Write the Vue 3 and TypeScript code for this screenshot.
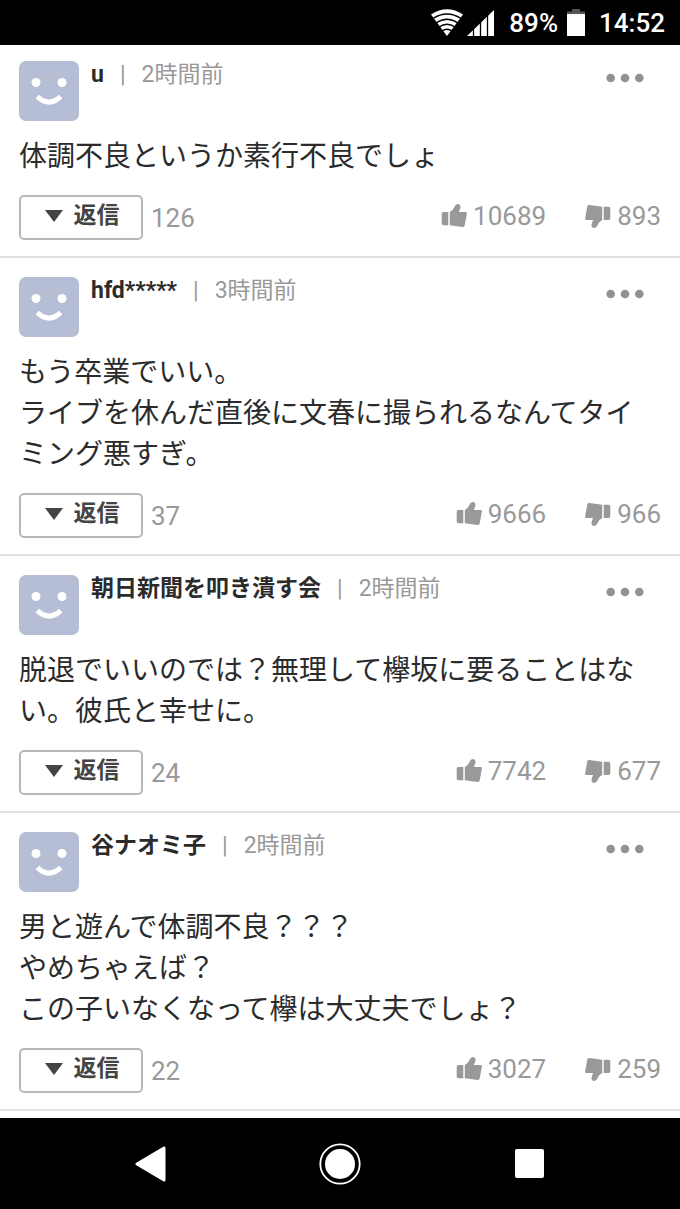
<script setup lang="ts">
interface Comment {
  id: number
  name: string
  time: string
  lines: string[]
  replies: number
  likes: number
  dislikes: number
}

const comments: Comment[] = [
  {
    id: 1,
    name: 'u',
    time: '2時間前',
    lines: ['体調不良というか素行不良でしょ'],
    replies: 126,
    likes: 10689,
    dislikes: 893,
  },
  {
    id: 2,
    name: 'hfd*****',
    time: '3時間前',
    lines: ['もう卒業でいい。', 'ライブを休んだ直後に文春に撮られるなんてタイミング悪すぎ。'],
    replies: 37,
    likes: 9666,
    dislikes: 966,
  },
  {
    id: 3,
    name: '朝日新聞を叩き潰す会',
    time: '2時間前',
    lines: ['脱退でいいのでは？無理して欅坂に要ることはない。彼氏と幸せに。'],
    replies: 24,
    likes: 7742,
    dislikes: 677,
  },
  {
    id: 4,
    name: '谷ナオミ子',
    time: '2時間前',
    lines: ['男と遊んで体調不良？？？', 'やめちゃえば？', 'この子いなくなって欅は大丈夫でしょ？'],
    replies: 22,
    likes: 3027,
    dislikes: 259,
  },
]
</script>

<template>
  <div class="screen">
    <header class="status">
      <svg class="wifi" width="32" height="27" viewBox="0 0 32 27" aria-hidden="true">
        <path d="M0 5.5Q16-5 32 5.5L16 27Z" fill="#fff" />
        <g fill="none" stroke="#000" stroke-width="1.3">
          <path d="M2 9.5Q16 .5 30 9.5" />
          <path d="M5 14Q16 6.5 27 14" />
          <path d="M8 18Q16 12.5 24 18" />
          <path d="M11 22Q16 18.5 21 22" />
        </g>
      </svg>
      <svg class="signal" width="27" height="27" viewBox="0 0 27 27" aria-hidden="true">
        <path d="M0 27L27 1V27Z" fill="#fff" />
        <path d="M6.5 0V27M13.5 0V27M20.5 0V27" stroke="#000" stroke-width="1.3" />
      </svg>
      <span class="percent">89%</span>
      <svg class="battery" width="18" height="27" viewBox="0 0 18 27" aria-hidden="true">
        <path d="M5 0H13V2.5H18V6H0V2.5H5Z" fill="#555" />
        <path d="M0 5H18V27H0Z" fill="#fff" />
      </svg>
      <span class="clock">14:52</span>
    </header>

    <main class="feed">
      <article v-for="c in comments" :key="c.id" class="comment">
        <div class="head">
          <svg class="avatar" width="60" height="60" viewBox="0 0 60 60" aria-hidden="true">
            <rect width="60" height="60" rx="7" fill="#b6bed5" />
            <circle cx="17" cy="21.5" r="4.5" fill="#fff" />
            <circle cx="43" cy="21.5" r="4.5" fill="#fff" />
            <path d="M18.3 35.7Q30 46.5 41.7 35.7" fill="none" stroke="#fff" stroke-width="5" />
          </svg>
          <div class="meta">
            <strong class="name">{{ c.name }}</strong>
            <span class="bar">|</span>
            <span class="time">{{ c.time }}</span>
          </div>
          <button class="more" type="button" aria-label="メニュー">
            <svg width="38" height="10" viewBox="0 0 38 10" aria-hidden="true">
              <g fill="#929292">
                <circle cx="4.7" cy="5" r="4.3" />
                <circle cx="19" cy="5" r="4.3" />
                <circle cx="33.3" cy="5" r="4.3" />
              </g>
            </svg>
          </button>
        </div>

        <div class="body">
          <p v-for="(line, i) in c.lines" :key="i">{{ line }}</p>
        </div>

        <div class="actions">
          <button class="reply" type="button">
            <svg width="18" height="12" viewBox="0 0 18 12" aria-hidden="true">
              <path d="M0 0H18L9 12Z" fill="#444" />
            </svg>
            <span>返信</span>
          </button>
          <span class="replies">{{ c.replies }}</span>
          <button class="vote" type="button" aria-label="そう思う">
            <svg width="26" height="24" viewBox="0 0 26 24" aria-hidden="true">
              <path
                d="M2.5 8H7.3V21.3H2.5Q.7 21.3 .7 19.5V9.8Q.7 8 2.5 8ZM8.8 8.6Q8.8 7.6 9.8 7.2Q12 6.3 13.5 2.8Q14.6 0 16.8 0Q19.6 .2 19.5 3Q19.3 5.4 17.8 7.9H24.6Q26.2 8 25.9 9.6L23.7 21.6Q23.3 23.3 21.6 23L8.8 21.3Z"
                fill="#999"
              />
            </svg>
            <span>{{ c.likes }}</span>
          </button>
          <button class="vote" type="button" aria-label="そう思わない">
            <svg width="26" height="24" viewBox="0 0 26 24" aria-hidden="true">
              <path
                transform="rotate(180 13 12)"
                d="M2.5 8H7.3V21.3H2.5Q.7 21.3 .7 19.5V9.8Q.7 8 2.5 8ZM8.8 8.6Q8.8 7.6 9.8 7.2Q12 6.3 13.5 2.8Q14.6 0 16.8 0Q19.6 .2 19.5 3Q19.3 5.4 17.8 7.9H24.6Q26.2 8 25.9 9.6L23.7 21.6Q23.3 23.3 21.6 23L8.8 21.3Z"
                fill="#999"
              />
            </svg>
            <span>{{ c.dislikes }}</span>
          </button>
        </div>
      </article>
    </main>

    <nav class="nav">
      <button type="button" aria-label="戻る">
        <svg width="31" height="36" viewBox="0 0 31 36" aria-hidden="true">
          <path d="M2 18L29 2V34Z" fill="#fff" stroke="#fff" stroke-width="3" stroke-linejoin="round" />
        </svg>
      </button>
      <button type="button" aria-label="ホーム">
        <svg width="42" height="42" viewBox="0 0 42 42" aria-hidden="true">
          <circle cx="21" cy="21" r="19.7" fill="none" stroke="#fff" stroke-width="1.8" />
          <circle cx="21" cy="21" r="15" fill="#fff" />
        </svg>
      </button>
      <button type="button" aria-label="履歴">
        <svg width="29" height="29" viewBox="0 0 29 29" aria-hidden="true">
          <rect width="29" height="29" rx="2" fill="#fff" />
        </svg>
      </button>
    </nav>
  </div>
</template>

<style>
body {
  margin: 0;
  background: #fff;
}
</style>

<style scoped>
.screen {
  display: flex;
  flex-direction: column;
  min-height: 100vh;
  font-family: Roboto, 'Noto Sans CJK JP', sans-serif;
  color: #2b2b2b;
}

button {
  margin: 0;
  padding: 0;
  border: 0;
  background: none;
  font: inherit;
  color: inherit;
  cursor: pointer;
}

svg {
  display: block;
  flex: none;
}

.status {
  display: flex;
  align-items: center;
  justify-content: flex-end;
  box-sizing: border-box;
  height: 45px;
  padding: 2px 15px 0 0;
  background: #000;
  color: #fff;
  font-size: 26px;
  font-weight: 500;
  line-height: 45px;
}

.status svg {
  margin-bottom: 2px;
}

.status .signal {
  margin-left: 4px;
}

.percent {
  margin-left: 15px;
}

.status .battery {
  margin-left: 9px;
  margin-right: 14px;
}

.feed {
  flex: 1;
}

.comment {
  padding: 19px 19px 16px;
  border-bottom: 2px solid #e2e2e2;
}

.comment:first-child {
  padding-top: 16px;
}

.head {
  display: flex;
  align-items: flex-start;
}

.meta {
  display: flex;
  flex: 1;
  min-width: 0;
  margin-left: 12px;
  font-size: 23px;
  line-height: 28px;
}

.name {
  font-weight: 700;
}

.bar {
  margin: 0 16px;
  color: #999;
}

.time {
  color: #999;
}

.more {
  padding: 12px 17px 12px 16px;
}

.body {
  margin: 15px 0 18px;
  font-size: 28px;
  line-height: 41px;
}

.body p {
  margin: 0;
}

.actions {
  display: flex;
  align-items: center;
  color: #999;
  font-size: 26px;
  line-height: 30px;
}

.reply {
  display: flex;
  align-items: center;
  justify-content: center;
  gap: 11px;
  box-sizing: border-box;
  width: 124px;
  height: 45px;
  padding: 0 0 4px 2px;
  border: 2px solid #b8b8b8;
  border-radius: 5px;
  color: #444;
  font-size: 23px;
  font-weight: 700;
}

.replies {
  flex: 1;
  padding: 0 0 0 8px;
}

.vote {
  display: flex;
  align-items: center;
  gap: 6px;
  padding-bottom: 3px;
}

.vote + .vote {
  margin-left: 39px;
}

.nav {
  display: grid;
  grid-template-columns: repeat(3, 1fr);
  height: 91px;
  padding: 0 56px;
  background: #000;
}

.nav button {
  display: flex;
  align-items: center;
  justify-content: center;
}
</style>
